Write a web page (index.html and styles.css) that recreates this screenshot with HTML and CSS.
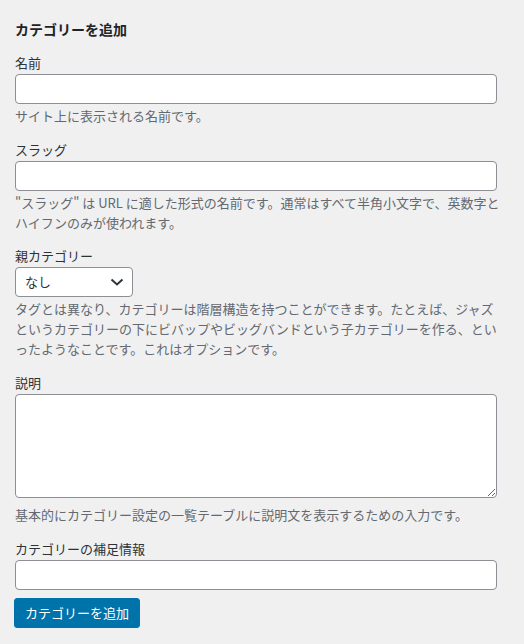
FILE: index.html
```html
<!DOCTYPE html>
<html lang="ja">
<head>
<meta charset="utf-8">
<title>カテゴリーを追加</title>
<link rel="stylesheet" href="styles.css">
</head>
<body>
<div class="form-wrap">
  <h2 class="title">カテゴリーを追加</h2>
  <form class="form">
    <div class="field">
      <label class="label" for="tag-name">名前</label>
      <input class="input" id="tag-name" type="text">
      <p class="description">サイト上に表示される名前です。</p>
    </div>
    <div class="field">
      <label class="label" for="tag-slug">スラッグ</label>
      <input class="input" id="tag-slug" type="text">
      <p class="description">"スラッグ" は URL に適した形式の名前です。通常はすべて半角小文字で、英数字とハイフンのみが使われます。</p>
    </div>
    <div class="field">
      <label class="label" for="parent">親カテゴリー</label>
      <div class="select-wrap">
        <select class="select" id="parent"><option>なし</option></select>
        <svg class="chevron" width="16" height="16" viewBox="0 0 16 16" aria-hidden="true"><path d="M2.5 5.5 L8 10.5 L13.5 5.5" fill="none" stroke="#2c3338" stroke-width="2"/></svg>
      </div>
      <p class="description">タグとは異なり、カテゴリーは階層構造を持つことができます。たとえば、ジャズというカテゴリーの下にビバップやビッグバンドという子カテゴリーを作る、といったようなことです。これはオプションです。</p>
    </div>
    <div class="field">
      <label class="label" for="desc">説明</label>
      <textarea class="textarea" id="desc"></textarea>
      <p class="description description-textarea">基本的にカテゴリー設定の一覧テーブルに説明文を表示するための入力です。</p>
    </div>
    <div class="field field-last">
      <label class="label" for="extra">カテゴリーの補足情報</label>
      <input class="input" id="extra" type="text">
    </div>
    <div class="submit">
      <button class="button" type="button">カテゴリーを追加</button>
    </div>
  </form>
</div>
</body>
</html>
```
FILE: styles.css
```css
html, body {
  margin: 0;
  padding: 0;
  background: #f0f0f1;
}
body {
  font-family: "Noto Sans CJK JP", "Noto Sans", sans-serif;
  font-size: 13px;
  line-height: 1.5;
  color: #1d2327;
}
.form-wrap {
  width: 482px;
  padding: 19px 27px 0 15px;
}
.title {
  margin: 0;
  font-size: 14px;
  font-weight: 700;
  line-height: 20px;
  color: #1d2327;
}
.form {
  margin: 14px 0 0;
}
.field {
  margin: 0 0 13.5px;
}
.field-last {
  margin-bottom: 8.5px;
}
.label {
  display: block;
  margin: 0 0 1px;
  line-height: 20px;
  font-weight: 400;
  color: #2c3338;
}
.input {
  display: block;
  box-sizing: border-box;
  width: 100%;
  height: 30px;
  margin: 0;
  padding: 0 8px;
  border: 1px solid #8c8f94;
  border-radius: 4px;
  background: #fff;
  font: inherit;
  color: #2c3338;
}
.description {
  margin: 2px -8px 0 0;
  color: #646970;
  line-height: 20px;
}
.description-textarea {
  margin-top: 7.5px;
}
.select-wrap {
  position: relative;
  width: 118px;
  height: 30px;
}
.select {
  display: block;
  box-sizing: border-box;
  width: 118px;
  height: 30px;
  margin: 0;
  padding: 0 24px 0 9px;
  border: 1px solid #8c8f94;
  border-radius: 4px;
  background: #fff;
  font: inherit;
  color: #2c3338;
  appearance: none;
  -webkit-appearance: none;
}
.chevron {
  position: absolute;
  right: 8px;
  top: 7px;
  pointer-events: none;
}
.textarea {
  display: block;
  box-sizing: border-box;
  width: 100%;
  height: 104px;
  margin: 0;
  padding: 2px 6px;
  border: 1px solid #8c8f94;
  border-radius: 4px;
  background: #fff;
  font: inherit;
  color: #2c3338;
}
.submit {
  margin: 0;
}
.button {
  display: inline-block;
  box-sizing: border-box;
  height: 30px;
  margin: 0 0 0 -1px;
  padding: 0 10px;
  border: 1px solid #0073aa;
  border-radius: 3px;
  background: #0073aa;
  color: #fff;
  font: inherit;
  line-height: 28px;
  cursor: pointer;
}
```
